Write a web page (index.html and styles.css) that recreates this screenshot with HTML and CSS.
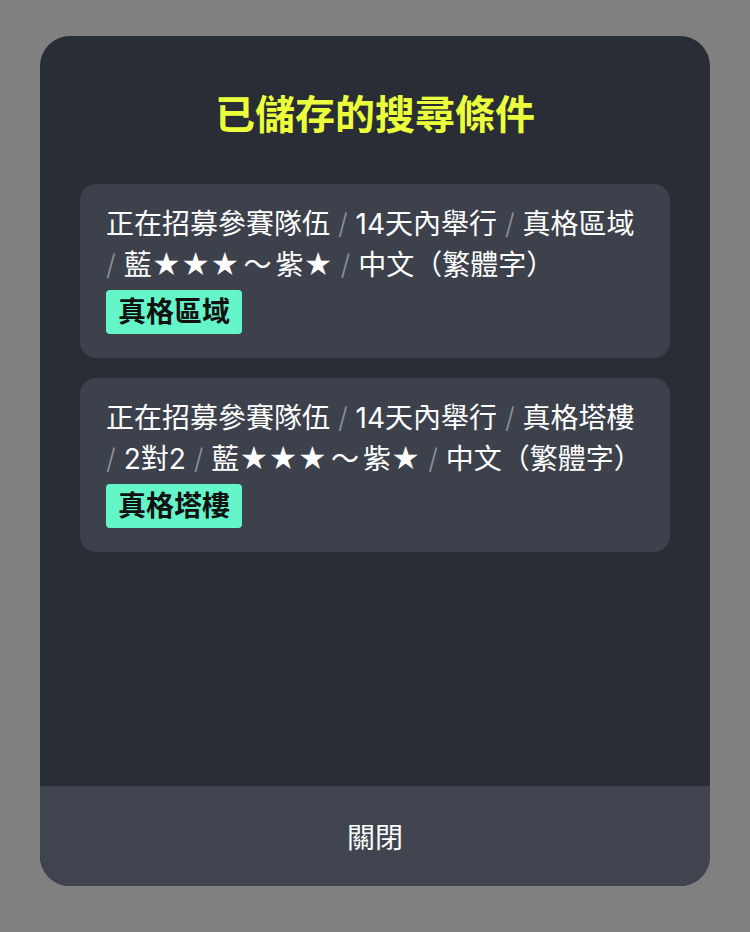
FILE: index.html
```html
<!DOCTYPE html>
<html lang="zh-Hant">
<head>
    <meta charset="UTF-8">
    <meta name="viewport" content="width=device-width, initial-scale=1.0">
    <title>已儲存的搜尋條件</title>
    <link rel="stylesheet" href="styles.css">
</head>
<body>

    <div class="modal">
        <div class="modal-body">
            <div class="modal-title">已儲存的搜尋條件</div>

            <div class="search-list">
                <!-- Saved search 1 -->
                <div class="search-card">
                    <div class="search-text">正在招募參賽隊伍 <span class="sep">/</span> 14天內舉行 <span class="sep">/</span> 真格區域 <span class="sep">/</span> 藍★★★<span class="tilde">～</span>紫★ <span class="sep">/</span> 中文（繁體字）</div>
                    <span class="tag">真格區域</span>
                </div>

                <!-- Saved search 2 -->
                <div class="search-card">
                    <div class="search-text">正在招募參賽隊伍 <span class="sep">/</span> 14天內舉行 <span class="sep">/</span> 真格塔樓 <span class="sep">/</span> 2對2 <span class="sep">/</span> 藍★★★<span class="tilde">～</span>紫★ <span class="sep">/</span> 中文（繁體字）</div>
                    <span class="tag">真格塔樓</span>
                </div>
            </div>
        </div>

        <div class="modal-footer">關閉</div>
    </div>

</body>
</html>
```

FILE: styles.css
```css
/* General Styles */
body {
    margin: 0;
    background: #808080;
    font-family: Inter, "Noto Sans CJK TC", sans-serif;
    height: 100vh;
    box-sizing: border-box;
    padding: 36px 40px 46px;
}

/* Modal */
.modal {
    height: 850px;
    background: #292d36;
    border-radius: 30px;
    overflow: hidden;
    display: flex;
    flex-direction: column;
}

.modal-body {
    flex: 1;
    padding: 55px 40px 0;
}

.modal-title {
    color: #ebff3b;
    font-size: 40px;
    font-weight: bold;
    line-height: 48px;
    text-align: center;
    margin-bottom: 45px;
}

.search-list {
    display: flex;
    flex-direction: column;
    gap: 20px;
}

/* Card */
.search-card {
    background: #3c414c;
    border-radius: 16px;
    padding: 20px 26px 24px;
}

.search-text {
    color: #fff;
    font-size: 28px;
    line-height: 41px;
}

.sep {
    color: #8b9099;
    font-weight: 300;
}

.tilde {
    margin: 0 4px;
}

.tag {
    display: inline-block;
    margin-top: 4px;
    background: #64f6c9;
    color: #111;
    font-size: 28px;
    font-weight: bold;
    line-height: 44px;
    padding: 0 12px;
    border-radius: 4px;
}

/* Footer */
.modal-footer {
    height: 100px;
    background: #3f444f;
    color: #fff;
    font-size: 28px;
    display: flex;
    align-items: center;
    justify-content: center;
}
```
